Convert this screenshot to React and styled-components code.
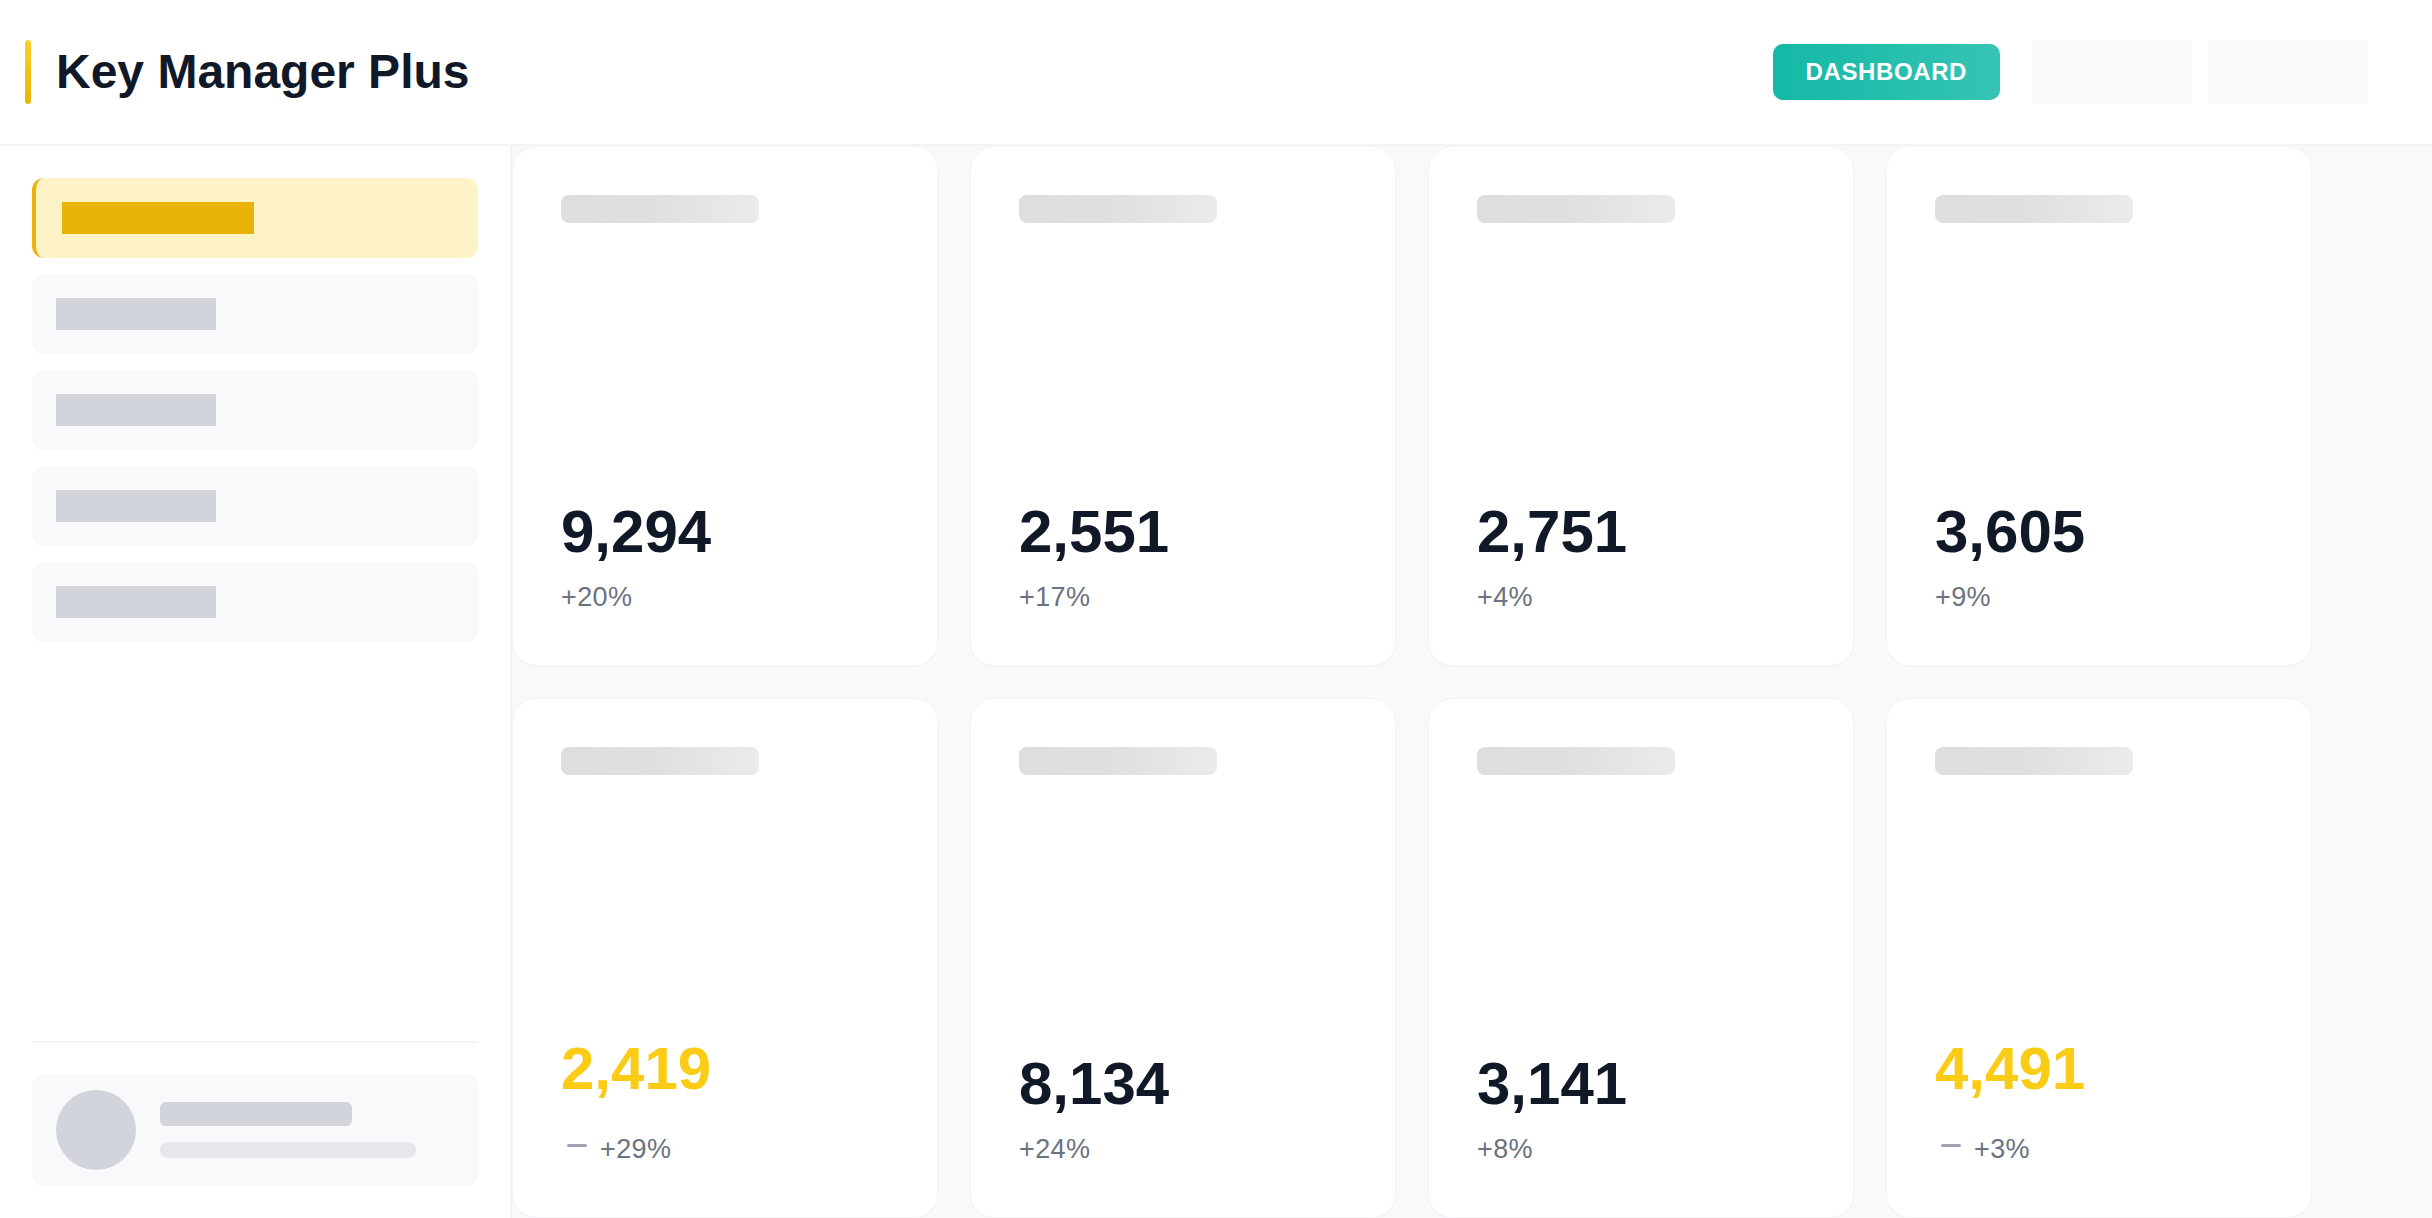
import React from "react";
import styled, { createGlobalStyle } from "styled-components";

const GlobalStyle = createGlobalStyle`
  html, body { margin: 0; padding: 0; }
  body {
    font-family: "Liberation Sans", Arial, sans-serif;
    background: #ffffff;
    color: #111827;
  }
  *, *::before, *::after { box-sizing: border-box; }
`;

const Page = styled.div`
  display: flex;
  flex-direction: column;
  height: 100vh;
  overflow: hidden;
`;

const Header = styled.header`
  flex-shrink: 0;
  height: 146px;
  display: flex;
  align-items: center;
  padding: 0 64px 0 25px;
  background: #ffffff;
  border-bottom: 2px solid #f3f4f6;
`;

const Brand = styled.div`
  display: flex;
  align-items: center;
  gap: 25px;
`;

const Accent = styled.span`
  display: block;
  width: 6px;
  height: 64px;
  border-radius: 3px;
  background: linear-gradient(180deg, #fcd12a 0%, #eab308 100%);
`;

const Title = styled.h1`
  margin: 0;
  font-size: 48px;
  font-weight: 700;
  color: #111827;
  line-height: 1;
`;

const Actions = styled.div`
  margin-left: auto;
  display: flex;
  align-items: center;
  gap: 16px;
`;

const PrimaryButton = styled.button`
  height: 56px;
  padding: 0 33px;
  margin-right: 16px;
  border: none;
  border-radius: 10px;
  background: linear-gradient(90deg, #14b8a6 0%, #36c4b4 100%);
  color: #ffffff;
  font-family: "Liberation Sans", Arial, sans-serif;
  font-size: 24px;
  font-weight: 700;
  letter-spacing: 0.6px;
  cursor: pointer;
`;

const GhostBox = styled.div`
  width: 160px;
  height: 64px;
  background: #f8f9fb;
`;

const Body = styled.div`
  flex: 1;
  min-height: 0;
  display: flex;
`;

const Sidebar = styled.aside`
  width: 512px;
  flex-shrink: 0;
  display: flex;
  flex-direction: column;
  padding: 32px;
  background: #ffffff;
  border-right: 2px solid #f3f4f6;
`;

const NavList = styled.nav`
  display: flex;
  flex-direction: column;
  gap: 16px;
`;

const NavItem = styled.div`
  height: 80px;
  display: flex;
  align-items: center;
  border-radius: 12px;
  padding: 0 24px 0 ${(p) => (p.$active ? "26px" : "24px")};
  background: ${(p) => (p.$active ? "#fef3c7" : "#f8f9fb")};
  border-left: ${(p) => (p.$active ? "4px solid #eab308" : "none")};
`;

const NavLabel = styled.span`
  display: block;
  height: 32px;
  width: ${(p) => p.$w}px;
  background: ${(p) => (p.$active ? "#eab308" : "#d1d5db")};
`;

const SidebarFooter = styled.div`
  margin-top: auto;
  border-top: 2px solid #f3f4f6;
  padding-top: 31px;
`;

const Profile = styled.div`
  height: 112px;
  display: flex;
  align-items: center;
  gap: 24px;
  padding: 0 24px;
  border-radius: 12px;
  background: #f8f9fb;
`;

const Avatar = styled.div`
  width: 80px;
  height: 80px;
  border-radius: 50%;
  background: #d1d5db;
  flex-shrink: 0;
`;

const ProfileLines = styled.div`
  display: flex;
  flex-direction: column;
  gap: 16px;
`;

const Line = styled.span`
  display: block;
  width: ${(p) => p.$w}px;
  height: ${(p) => p.$h}px;
  border-radius: ${(p) => p.$r}px;
  background: ${(p) => p.$c};
`;

const Main = styled.main`
  flex: 1;
  min-width: 0;
  background: #f8f9fb;
  display: grid;
  grid-template-columns: repeat(4, 426px);
  grid-template-rows: repeat(2, 1fr);
  gap: 32px;
`;

const Card = styled.section`
  background: #ffffff;
  border: 1px solid #f3f4f6;
  border-radius: 24px;
  padding: 48px;
  display: flex;
  flex-direction: column;
  justify-content: space-between;
  box-shadow: 0 1px 2px rgba(17, 24, 39, 0.02);
`;

const Skeleton = styled.div`
  width: 198px;
  height: 28px;
  border-radius: 8px;
  background: linear-gradient(90deg, #dedede 0%, #dfdfdf 45%, #ebebeb 100%);
`;

const Value = styled.div`
  font-size: 60px;
  font-weight: 700;
  line-height: 1;
  color: ${(p) => (p.$highlight ? "#facc15" : "#111827")};
`;

const ChangeRow = styled.div`
  display: flex;
  align-items: center;
  gap: 13px;
  margin-top: ${(p) => (p.$withIcon ? "31px" : "16px")};
`;

const ChangeText = styled.span`
  font-size: 27px;
  line-height: 39px;
  letter-spacing: 0.4px;
  color: #6b7280;
`;

const DashIcon = styled.svg`
  display: block;
  margin-left: 6px;
  flex-shrink: 0;
`;

const Dash = () => (
  <DashIcon width="20" height="12" viewBox="0 0 20 12" aria-hidden="true">
    <rect x="0" y="0" width="20" height="3" rx="1.5" fill="#9ca3af" />
  </DashIcon>
);

const navItems = [
  { w: 192, active: true },
  { w: 160 },
  { w: 160 },
  { w: 160 },
  { w: 160 },
];

const stats = [
  { value: "9,294", change: "+20%" },
  { value: "2,551", change: "+17%" },
  { value: "2,751", change: "+4%" },
  { value: "3,605", change: "+9%" },
  { value: "2,419", change: "+29%", highlight: true },
  { value: "8,134", change: "+24%" },
  { value: "3,141", change: "+8%" },
  { value: "4,491", change: "+3%", highlight: true },
];

export default function App() {
  return (
    <>
      <GlobalStyle />
      <Page>
        <Header>
          <Brand>
            <Accent />
            <Title>Key Manager Plus</Title>
          </Brand>
          <Actions>
            <PrimaryButton>DASHBOARD</PrimaryButton>
            <GhostBox />
            <GhostBox />
          </Actions>
        </Header>
        <Body>
          <Sidebar>
            <NavList>
              {navItems.map((n, i) => (
                <NavItem key={i} $active={n.active}>
                  <NavLabel $w={n.w} $active={n.active} />
                </NavItem>
              ))}
            </NavList>
            <SidebarFooter>
              <Profile>
                <Avatar />
                <ProfileLines>
                  <Line $w={192} $h={24} $r={6} $c="#d1d5db" />
                  <Line $w={256} $h={16} $r={8} $c="#e5e7eb" />
                </ProfileLines>
              </Profile>
            </SidebarFooter>
          </Sidebar>
          <Main>
            {stats.map((s, i) => (
              <Card key={i}>
                <Skeleton />
                <div>
                  <Value $highlight={s.highlight}>{s.value}</Value>
                  <ChangeRow $withIcon={s.highlight}>
                    {s.highlight && <Dash />}
                    <ChangeText>{s.change}</ChangeText>
                  </ChangeRow>
                </div>
              </Card>
            ))}
          </Main>
        </Body>
      </Page>
    </>
  );
}
